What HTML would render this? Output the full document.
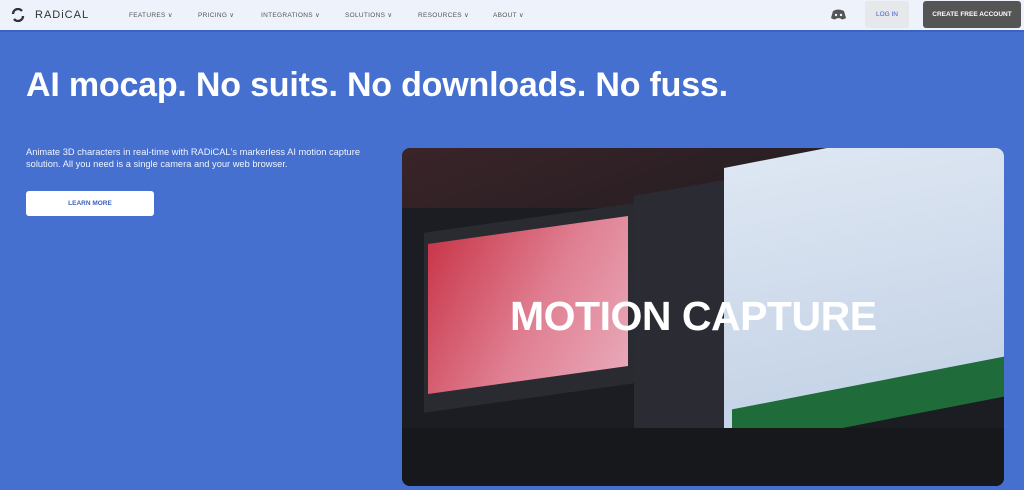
<!DOCTYPE html>
<html><head><meta charset="utf-8"><style>
*{margin:0;padding:0;box-sizing:border-box}
body{width:1024px;height:490px;overflow:hidden;background:#4570d0;font-family:"Liberation Sans",sans-serif;position:relative}
.hdr{position:absolute;left:0;top:0;width:1024px;height:32px;background:#eef2fb;border-bottom:2px solid #3b63c2}
.nav{position:absolute;top:11px;font-size:6.5px;color:#555;letter-spacing:.3px}
.logo{position:absolute;left:35px;top:9px;font-size:11px;color:#333;letter-spacing:1px}
.login{position:absolute;left:865px;top:1px;width:44px;height:27px;background:#e6e8ec;border-radius:3px;font-size:6.5px;color:#3c5fc0;text-align:center;line-height:27px}
.cta{position:absolute;left:923px;top:1px;width:98px;height:27px;background:#555;border-radius:3px;font-size:6.5px;color:#fff;text-align:center;line-height:27px;font-weight:bold}
h1{position:absolute;left:26px;top:66px;color:#fff;font-size:34px;font-weight:bold;letter-spacing:-.2px;white-space:nowrap}
p{position:absolute;left:26px;top:146px;color:#f0f4ff;font-size:9.3px;line-height:12px;width:345px}
.btn{position:absolute;left:26px;top:191px;width:128px;height:25px;background:#fff;border-radius:3px;color:#3c5fc0;font-size:6.5px;font-weight:bold;text-align:center;line-height:25px}
.img{position:absolute;left:402px;top:148px;width:602px;height:338px;border-radius:8px;overflow:hidden;background:#1c1d22}
</style></head><body>
<div class="hdr">
<svg style="position:absolute;left:11px;top:8px" width="14" height="14" viewBox="0 0 14 14"><path d="M2 6 A5 5 0 0 1 11 3" stroke="#333" stroke-width="2.4" fill="none"/><path d="M12 8 A5 5 0 0 1 3 11" stroke="#333" stroke-width="2.4" fill="none"/></svg>
<div class="logo">RADiCAL</div>
<div class="nav" style="left:129px">FEATURES ∨</div>
<div class="nav" style="left:198px">PRICING ∨</div>
<div class="nav" style="left:261px">INTEGRATIONS ∨</div>
<div class="nav" style="left:345px">SOLUTIONS ∨</div>
<div class="nav" style="left:418px">RESOURCES ∨</div>
<div class="nav" style="left:493px">ABOUT ∨</div>
<svg style="position:absolute;left:831px;top:9px" width="15" height="11" viewBox="0 0 15 11"><path d="M2 2 Q7 -1 13 2 L15 9 Q12 11 10 10 L9 9 Q7.5 9.5 6 9 L5 10 Q3 11 0 9Z" fill="#555"/><circle cx="5" cy="6" r="1.2" fill="#eef2fb"/><circle cx="10" cy="6" r="1.2" fill="#eef2fb"/></svg>
<div class="login">LOG IN</div>
<div class="cta">CREATE FREE ACCOUNT</div>
</div>
<h1>AI mocap. No suits. No downloads. No fuss.</h1>
<p>Animate 3D characters in real-time with RADiCAL's markerless AI motion capture solution. All you need is a single camera and your web browser.</p>
<div class="btn">LEARN MORE</div>
<div class="img">
<div style="position:absolute;left:0;top:0;width:602px;height:60px;background:linear-gradient(160deg,#3a2428,#1b1b20)"></div>
<div style="position:absolute;left:22px;top:70px;width:210px;height:180px;background:#2a2b31;transform:skewY(-8deg)"></div>
<div style="position:absolute;left:26px;top:82px;width:200px;height:150px;background:linear-gradient(120deg,#c9374a,#e07f92 55%,#e8a8b8);transform:skewY(-8deg)"></div>
<div style="position:absolute;left:232px;top:40px;width:90px;height:260px;background:#2b2c33;transform:skewY(-10deg)"></div>
<div style="position:absolute;left:322px;top:20px;width:280px;height:280px;background:linear-gradient(180deg,#dde6f2,#c3d2e6);transform:skewY(-11deg);transform-origin:0 0"></div>
<div style="position:absolute;left:330px;top:235px;width:272px;height:40px;background:#1f6b3a;transform:skewY(-11deg)"></div>
<div style="position:absolute;left:0;top:280px;width:602px;height:60px;background:#17181c"></div>
<div style="position:absolute;left:108px;top:145px;color:#fff;font-size:41px;font-weight:bold;letter-spacing:-.5px;white-space:nowrap">MOTION CAPTURE</div>
</div>
</body></html>
